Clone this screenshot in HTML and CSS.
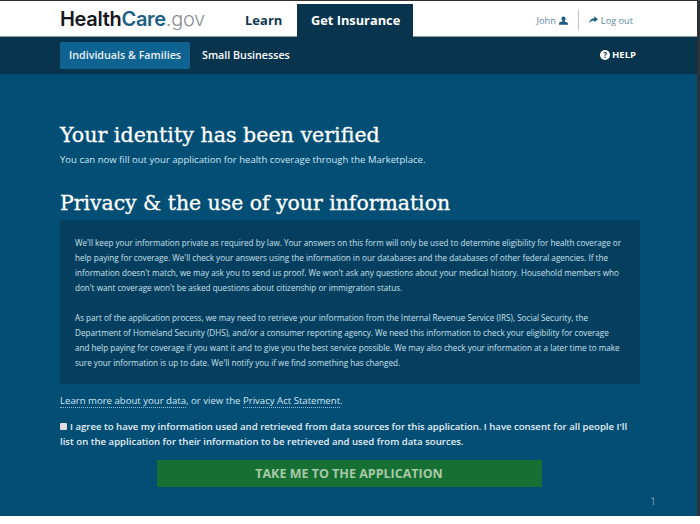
FILE: index.html
```html
<!DOCTYPE html>
<html lang="en">
<head>
<meta charset="utf-8">
<title>HealthCare.gov</title>
<link rel="stylesheet" href="styles.css">
</head>
<body>
<div class="frame">
  <header class="topbar">
    <div class="logo"><span class="logo-health">Health</span><span class="logo-care">Care</span><span class="logo-gov">.gov</span></div>
    <nav class="tabs">
      <a class="tab">Learn</a>
      <a class="tab tab-active">Get Insurance</a>
    </nav>
    <div class="account">
      <span class="user">John
        <svg class="ico" viewBox="0 0 12 12"><path d="M6 .5c1.700 0 2.700 1.200 2.700 3 0 1.200-.5 2.200-1.200 2.800v1l3.500 1.500c.6.3 1 .7 1 1.400V11.500H0V9.800c0-.7.400-1.100 1-1.400l3.500-1.500v-1C3.800 5.300 3.300 4.700 3.300 3.500c0-1.800 1-3 2.700-3z"/></svg>
      </span>
      <span class="logout">
        <svg class="ico-arrow" viewBox="0 0 12 10"><path d="M7 0l5 4-5 4V5.500C4 5.500 2 6.500 0 9.500 .5 5.500 3 2.800 7 2.500z"/></svg>
        Log out
      </span>
    </div>
  </header>
  <div class="subnav">
    <div class="subnav-links">
      <a class="pill pill-active">Individuals &amp; Families</a>
      <a class="pill">Small Businesses</a>
    </div>
    <a class="help"><span class="help-ico">?</span>HELP</a>
  </div>
  <main class="content">
    <h1>Your identity has been verified</h1>
    <p class="lead">You can now fill out your application for health coverage through the Marketplace.</p>
    <h2>Privacy &amp; the use of your information</h2>
    <section class="notice">
      <p>We'll keep your information private as required by law. Your answers on this form will only be used to determine eligibility for health coverage or help paying for coverage. We'll check your answers using the information in our databases and the databases of other federal agencies. If the information doesn't match, we may ask you to send us proof. We won't ask any questions about your medical history. Household members who don't want coverage won't be asked questions about citizenship or immigration status.</p>
      <p>As part of the application process, we may need to retrieve your information from the Internal Revenue Service (IRS), Social Security, the Department of Homeland Security (DHS), and/or a consumer reporting agency. We need this information to check your eligibility for coverage and help paying for coverage if you want it and to give you the best service possible. We may also check your information at a later time to make sure your information is up to date. We'll notify you if we find something has changed.</p>
    </section>
    <p class="links"><a>Learn more about your data</a>, or view the <a>Privacy Act Statement</a>.</p>
    <label class="agree"><span class="check"></span>I agree to have my information used and retrieved from data sources for this application. I have consent for all people I'll list on the application for their information to be retrieved and used from data sources.</label>
    <div class="actions"><a class="cta">TAKE ME TO THE APPLICATION</a></div>
    <div class="page-no">1</div>
  </main>
</div>
</body>
</html>
```
FILE: styles.css
```css
* { box-sizing: border-box; }
html, body { margin: 0; height: 100%; background: #fff; }
body { font-family: "Open Sans", sans-serif; overflow: hidden; }
.frame { width: 700px; height: 516px; border-top: 1px solid #333; border-right: 3px solid #2b3238; display: flex; flex-direction: column; }
.topbar { height: 36px; display: flex; align-items: stretch; padding-left: 60px; background: #fff; border-bottom: 1px solid #8a9ba6; }
.logo { width: 170px; font-family: "Inter", sans-serif; font-size: 20px; line-height: 36px; letter-spacing: -.3px; }
.logo-health { color: #14181c; font-weight: 600; }
.logo-care { color: #1d5f85; font-weight: 600; }
.logo-gov { color: #8a8f92; font-weight: 300; }
.tabs { display: flex; align-items: stretch; margin-top: 3px; margin-bottom: -1px; white-space: nowrap; }
.tab { font-size: 13px; font-weight: 700; color: #0f3750; line-height: 32px; width: 67px; padding-left: 15px; }
.tab-active { background: #08344d; color: #fff; width: 116px; padding-left: 14px; font-size: 12.800px; }
.account { margin-left: auto; display: flex; align-items: center; font-size: 9.200px; color: #5b87a3; padding: 3px 64px 0 0; white-space: nowrap; }
.user { display: flex; align-items: center; gap: 3px; padding-right: 10px; height: 20px; border-right: 1px solid #b9c4cb; }
.logout { display: flex; align-items: center; gap: 3px; padding-left: 10px; }
.ico { width: 9px; height: 9px; fill: #1d5f85; }
.ico-arrow { width: 9px; height: 8px; fill: #1d5f85; }
.subnav { height: 37px; background: #08344d; display: flex; align-items: center; justify-content: space-between; padding: 0 61px 0 60px; }
.subnav-links { display: flex; }
.pill { display: block; height: 27px; padding: 0 9px; margin-right: 3px; font-size: 10.700px; font-weight: 600; line-height: 27px; color: #fff; border-radius: 2px; }
.pill-active { background: #0f6390; color: #e8f1f6; }
.help { display: flex; align-items: center; gap: 2px; font-size: 9.500px; font-weight: 700; color: #fff; margin-top: -2px; }
.help-ico { width: 10px; height: 10px; border-radius: 50%; background: #fff; color: #08344d; font-size: 8px; line-height: 10px; text-align: center; }
.content { flex: 1; position: relative; background: #034e75; padding: 48px 57px 0 60px; color: #fff; }
h1, h2 { margin: 0; font-family: "DejaVu Serif", serif; font-weight: 400; color: #fff; -webkit-text-stroke: .3px #fff; }
h1 { font-size: 20.600px; line-height: 26px; }
h2 { font-size: 20.400px; line-height: 26px; margin-top: 22px; }
.lead { margin: 4px 0 0; font-size: 9.560px; line-height: 16px; color: #cfe6f3; }
.notice { margin-top: 4px; height: 164px; padding: 15px 16px 0 15px; background: #053f60; color: #cbe0ec; font-size: 8.140px; line-height: 15px; }
.notice p { margin: 0 0 15px; }
.links { margin: 10px 0 0; font-size: 9.600px; line-height: 14px; color: #d3e6f1; }
.links a { border-bottom: 1px dotted #8fc1dc; color: #d3e6f1; }
.agree { display: block; margin-top: 11px; font-size: 9.580px; font-weight: 600; line-height: 15px; color: #e6f0f6; }
.check { display: inline-block; width: 7px; height: 7px; background: #e3dfe0; border-radius: 1px; margin-right: 3px; }
.actions { display: flex; justify-content: center; margin-top: 11px; padding-right: 2px; }
.cta { width: 385px; height: 27px; background: #167033; color: #a9c9a8; font-size: 12.500px; font-weight: 700; line-height: 27px; text-align: center; }
.page-no { position: absolute; right: 41px; top: 420px; font-size: 10px; color: #7ea2b8; }
```
